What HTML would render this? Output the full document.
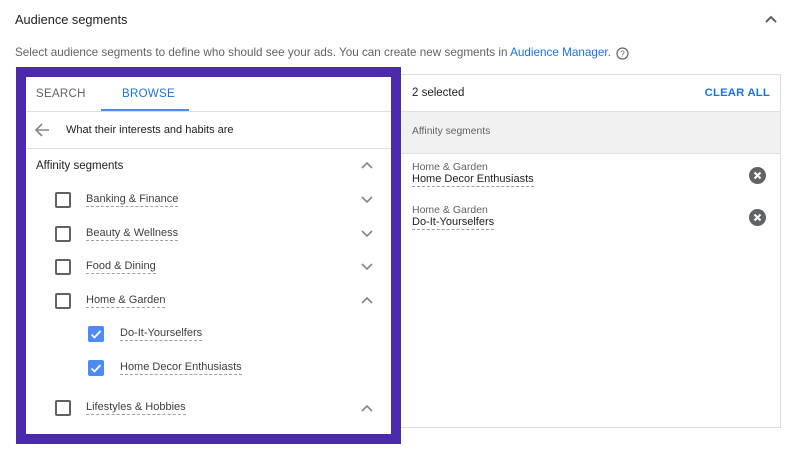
<!DOCTYPE html>
<html><head><style>
body{margin:0;width:800px;height:463px;background:#fff;font-family:"Liberation Sans",Roboto,sans-serif;position:relative;overflow:hidden;color:#202124}
.a{position:absolute;white-space:nowrap}
.t{font-size:11px;color:#3c4043}
.d{border-bottom:1px dashed #9aa0a6;padding-bottom:1px}
.cb{position:absolute;width:12px;height:12px;border:2px solid #5f6368;border-radius:2px}
.ck{position:absolute;width:16px;height:16px;background:#4c8bf5;border-radius:2px}
svg{position:absolute}
</style></head><body>
<div class="a" style="left:15px;top:12px;font-size:12.8px;color:#202124">Audience segments</div>
<svg style="left:764px;top:14px" width="14" height="10"><path d="M2 8 L7 3 L12 8" fill="none" stroke="#5f6368" stroke-width="2"/></svg>
<div class="a" style="left:15px;top:46px;font-size:11.7px;color:#5f6368">Select audience segments to define who should see your ads. You can create new segments in <span style="color:#1a73e8">Audience Manager</span>.</div>
<svg style="left:616px;top:47px" width="13" height="13"><circle cx="6.5" cy="6.5" r="5.5" fill="none" stroke="#5f6368" stroke-width="1.2"/><text x="6.5" y="9.5" font-size="8" text-anchor="middle" fill="#5f6368" font-family="Liberation Sans">?</text></svg>

<!-- right panel -->
<div class="a" style="left:399px;top:74px;width:381px;height:352px;border:1px solid #dadce0;border-left:none"></div>
<div class="a" style="left:412px;top:87px;font-size:11.5px">2 selected</div>
<div class="a" style="right:30px;top:87px;font-size:11.3px;color:#1a73e8;font-weight:bold;letter-spacing:.2px">CLEAR ALL</div>
<div class="a" style="left:399px;top:111px;width:381px;height:41px;background:#f1f1f1;border-top:1px solid #e0e0e0;border-bottom:1px solid #e0e0e0"></div>
<div class="a" style="left:412px;top:126px;font-size:10.3px;color:#5f6368">Affinity segments</div>
<div class="a" style="left:412px;top:161px;font-size:10.5px;color:#5f6368">Home &amp; Garden</div>
<div class="a d" style="left:412px;top:173px;font-size:11px">Home Decor Enthusiasts</div>
<div class="a" style="left:412px;top:204px;font-size:10.5px;color:#5f6368">Home &amp; Garden</div>
<div class="a d" style="left:412px;top:216px;font-size:11px">Do-It-Yourselfers</div>
<svg style="left:749px;top:167px" width="17" height="17"><circle cx="8.5" cy="8.5" r="8.5" fill="#5f6368"/><path d="M5.5 5.5L11.5 11.5M11.5 5.5L5.5 11.5" stroke="#fff" stroke-width="2"/></svg>
<svg style="left:749px;top:209px" width="17" height="17"><circle cx="8.5" cy="8.5" r="8.5" fill="#5f6368"/><path d="M5.5 5.5L11.5 11.5M11.5 5.5L5.5 11.5" stroke="#fff" stroke-width="2"/></svg>

<!-- left purple panel -->
<div class="a" style="left:16px;top:67px;width:365px;height:357px;border:10px solid #4b2aad;background:#fff"></div>
<div class="a" style="left:36px;top:88px;font-size:11.5px;color:#5f6368;letter-spacing:.3px">SEARCH</div>
<div class="a" style="left:122px;top:88px;font-size:11.5px;color:#1a73e8;letter-spacing:.3px">BROWSE</div>
<div class="a" style="left:101px;top:109px;width:88px;height:2px;background:#4c8bf5"></div>
<div class="a" style="left:26px;top:111px;width:365px;height:1px;background:#e0e0e0"></div>
<svg style="left:34px;top:122px" width="16" height="16"><path d="M15 8H2M8 2L2 8L8 14" fill="none" stroke="#80868b" stroke-width="1.6"/></svg>
<div class="a" style="left:66px;top:124px;font-size:11px">What their interests and habits are</div>
<div class="a" style="left:26px;top:148px;width:365px;height:1px;background:#e0e0e0"></div>
<div class="a" style="left:36px;top:160px;font-size:11.5px">Affinity segments</div>
<svg style="left:361px;top:161px" width="12" height="8"><path d="M1 7L6 2L11 7" fill="none" stroke="#80868b" stroke-width="1.6"/></svg>

<div class="cb" style="left:55px;top:192px"></div><div class="a d t" style="left:86px;top:193px">Banking &amp; Finance</div>
<svg style="left:361px;top:196px" width="12" height="8"><path d="M1 1L6 6L11 1" fill="none" stroke="#80868b" stroke-width="1.6"/></svg>
<div class="cb" style="left:55px;top:226px"></div><div class="a d t" style="left:86px;top:227px">Beauty &amp; Wellness</div>
<svg style="left:361px;top:230px" width="12" height="8"><path d="M1 1L6 6L11 1" fill="none" stroke="#80868b" stroke-width="1.6"/></svg>
<div class="cb" style="left:55px;top:259px"></div><div class="a d t" style="left:86px;top:260px">Food &amp; Dining</div>
<svg style="left:361px;top:263px" width="12" height="8"><path d="M1 1L6 6L11 1" fill="none" stroke="#80868b" stroke-width="1.6"/></svg>
<div class="cb" style="left:55px;top:293px"></div><div class="a d t" style="left:86px;top:294px">Home &amp; Garden</div>
<svg style="left:361px;top:296px" width="12" height="8"><path d="M1 7L6 2L11 7" fill="none" stroke="#80868b" stroke-width="1.6"/></svg>
<div class="ck" style="left:88px;top:326px"></div><svg style="left:88px;top:326px" width="16" height="16"><path d="M3.5 8.5L6.5 11.5L12.5 5" fill="none" stroke="#fff" stroke-width="1.8"/></svg>
<div class="a d t" style="left:120px;top:327px">Do-It-Yourselfers</div>
<div class="ck" style="left:88px;top:360px"></div><svg style="left:88px;top:360px" width="16" height="16"><path d="M3.5 8.5L6.5 11.5L12.5 5" fill="none" stroke="#fff" stroke-width="1.8"/></svg>
<div class="a d t" style="left:120px;top:361px">Home Decor Enthusiasts</div>
<div class="cb" style="left:55px;top:400px"></div><div class="a d t" style="left:86px;top:401px">Lifestyles &amp; Hobbies</div>
<svg style="left:361px;top:404px" width="12" height="8"><path d="M1 7L6 2L11 7" fill="none" stroke="#80868b" stroke-width="1.6"/></svg>
</body></html>
